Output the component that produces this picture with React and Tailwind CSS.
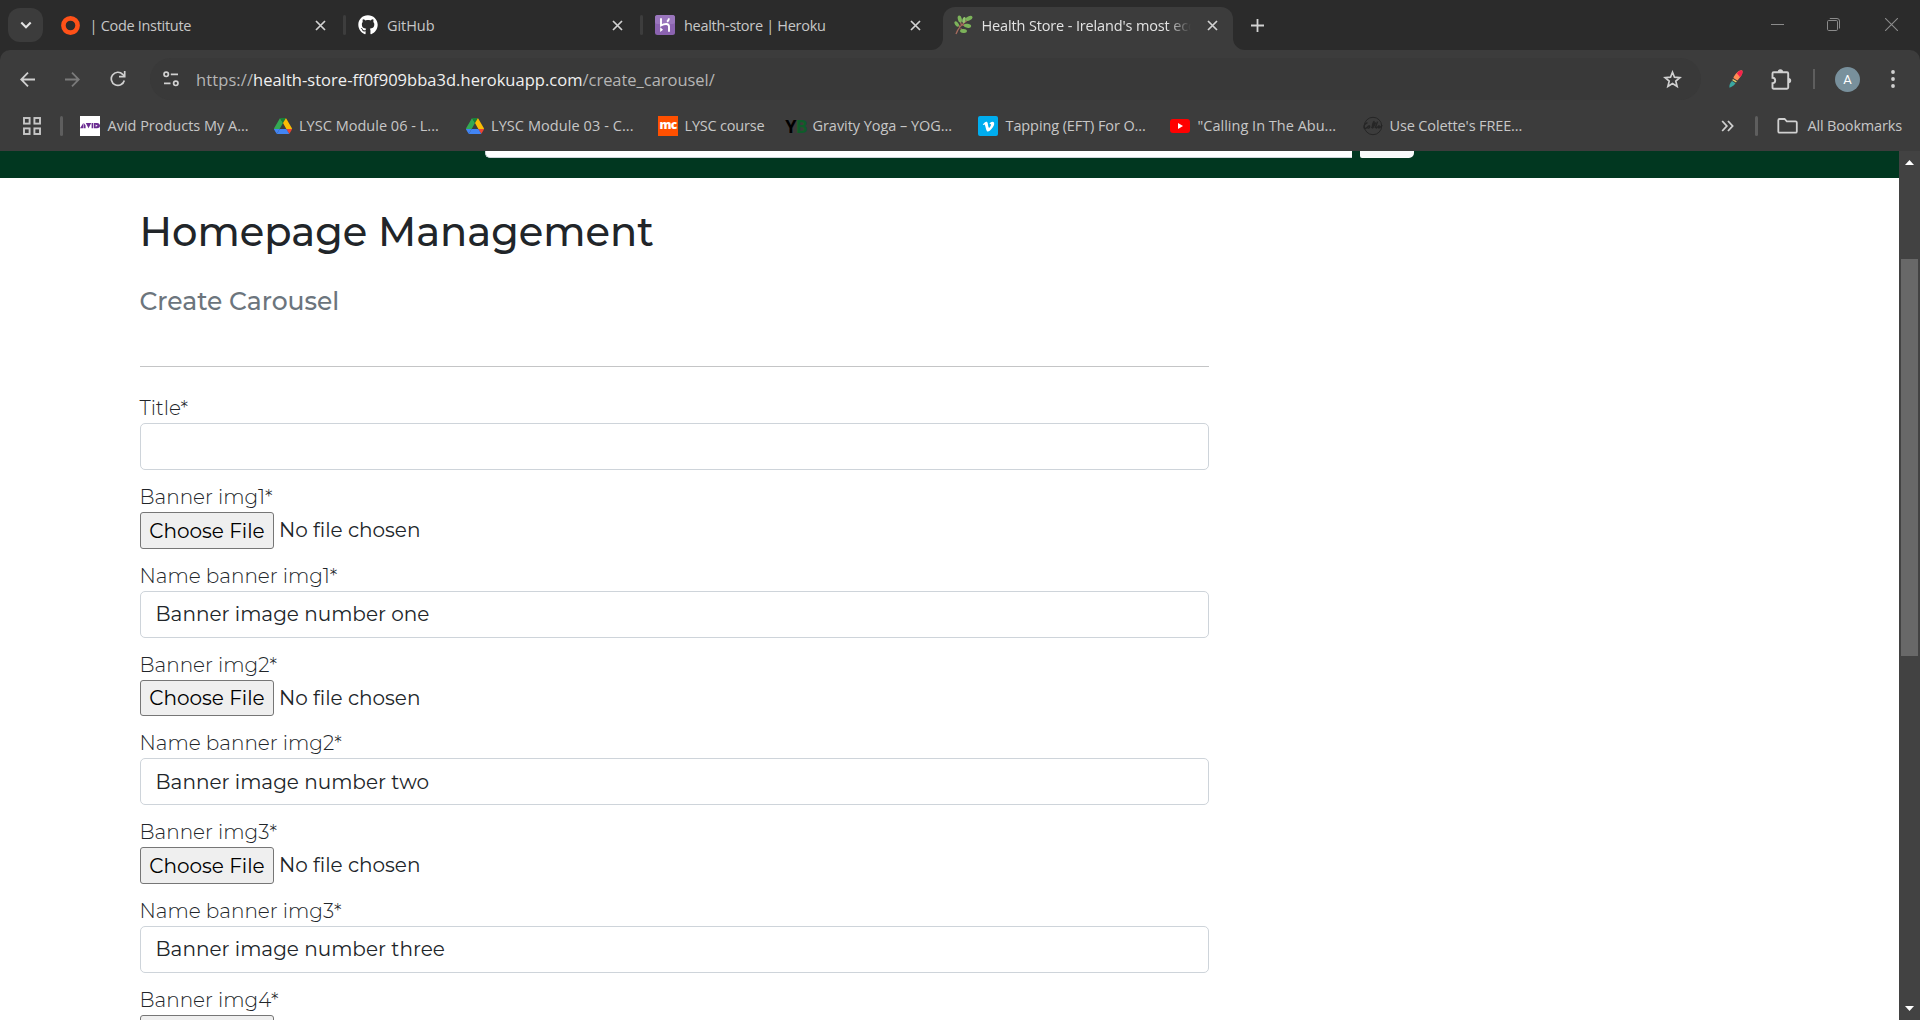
import { FaGithub, FaVimeoV } from "react-icons/fa";

const CloseIcon = ({ className = "" }) => (
  <svg className={`h-[11px] w-[11px] shrink-0 ${className}`} viewBox="0 0 11 11" fill="none" stroke="#d2d2d2" strokeWidth="1.7">
    <path d="M1 1l9 9M10 1l-9 9" />
  </svg>
);

const CodeInstituteIcon = () => (
  <svg className="h-5 w-5" viewBox="0 0 20 20" fill="none">
    <circle cx="9.500" cy="10.500" r="7.100" stroke="#ff5118" strokeWidth="4.600" />
  </svg>
);

const HerokuIcon = () => (
  <svg className="h-5 w-5" viewBox="0 0 20 20">
    <rect width="20" height="20" rx="2.5" fill="#8b63b0" />
    <rect width="20" height="9" rx="2.5" fill="#9a76bd" />
    <path d="M6 3.300v7.200c1.800-1 3.600-1.500 5.200-1.500 2 0 2.800 1 2.800 2.600v5.200M14 3.300c-.2 1.300-.9 2.600-1.900 3.500" fill="none" stroke="#fff" strokeWidth="1.900" />
    <path d="M5.200 12.300l2.800 2.400-2.800 2.300z" fill="#fff" />
  </svg>
);

const HerbIcon = () => (
  <svg className="h-5 w-5" viewBox="0 0 20 20">
    <path d="M3 19C4.500 14 8 9.500 16 4M7 12L4.500 9M8.500 10.500L7 5M7.500 13.500L11 16M9.500 10l5 1" fill="none" stroke="#a56a5c" strokeWidth="1.300" />
    <g fill="#7cb35a">
      <ellipse cx="3.700" cy="9" rx="1.700" ry="3" transform="rotate(-35 3.700 9)" />
      <ellipse cx="6.800" cy="4" rx="2" ry="3.500" transform="rotate(-14 6.800 4)" />
      <ellipse cx="11" cy="5" rx="1.700" ry="3" transform="rotate(14 11 5)" fill="#92c36e" />
      <ellipse cx="16" cy="3.300" rx="3.700" ry="2.100" transform="rotate(-25 16 3.300)" />
      <ellipse cx="14.500" cy="10.800" rx="3.700" ry="2" transform="rotate(12 14.500 10.800)" />
      <ellipse cx="10.500" cy="16" rx="3.500" ry="1.900" transform="rotate(6 10.500 16)" />
    </g>
  </svg>
);

const DriveIcon = () => (
  <svg className="h-[18px] w-[18px]" viewBox="0 0 87.300 78">
    <path d="m6.600 66.850 3.850 6.650c.8 1.400 1.950 2.500 3.300 3.300l13.750-23.800h-27.500c0 1.550.4 3.100 1.200 4.500z" fill="#4285f4" />
    <path d="m43.650 25-13.750-23.800c-1.350.8-2.500 1.900-3.300 3.300l-25.400 44a9.060 9.060 0 0 0 -1.200 4.500h27.500z" fill="#34a853" />
    <path d="m73.550 76.800c1.350-.8 2.500-1.900 3.300-3.300l1.600-2.750 7.650-13.250c.8-1.400 1.200-2.950 1.200-4.500h-27.502l5.852 11.500z" fill="#ea4335" />
    <path d="m43.650 25 13.750-23.800c-1.350-.8-2.900-1.200-4.500-1.200h-18.500c-1.600 0-3.150.45-4.500 1.200z" fill="#188038" />
    <path d="m59.800 53h-32.300l-13.750 23.800c1.350.8 2.900 1.200 4.500 1.200h50.800c1.600 0 3.150-.45 4.500-1.200z" fill="#4285f4" />
    <path d="m73.400 26.500-12.700-22c-.8-1.400-1.950-2.500-3.300-3.300l-13.750 23.800 16.150 28h27.450c0-1.550-.4-3.100-1.200-4.500z" fill="#fbbc04" />
  </svg>
);

const AvidIcon = () => (
  <svg className="h-5 w-5" viewBox="0 0 20 20">
    <rect width="20" height="20" fill="#fff" />
    <g fill="#6a2b91">
      <path d="M0 12.300L3.300 7v5.300zM3.800 7v5.300h1.800V9.500zM5.800 7h5.400L8.500 12.300zM11.600 7h1.700v5.300h-1.700zM14 7h2c3.500 0 4 1.800 4 2.700s-.5 2.600-4 2.600h-2z" />
    </g>
    <path d="M15.600 8.500v2.300l2-1.150z" fill="#fff" />
  </svg>
);

const McIcon = () => (
  <span className="flex h-5 w-5 items-center justify-center bg-[#ff5000] pb-[2px] font-['Open_Sans',sans-serif] text-[12px] leading-none font-extrabold tracking-[-0.8px] text-white">mc</span>
);

const YbIcon = () => (
  <span className="flex h-5 w-5 items-center justify-center font-['Open_Sans',sans-serif] text-[18px] leading-none font-bold tracking-[-1px] text-black">
    Y<span className="text-[#0f5c2a]">B</span>
  </span>
);

const VimeoIcon = () => (
  <span className="flex h-5 w-5 items-center justify-center rounded-[2px] bg-[#00adef] text-white">
    <FaVimeoV size={13} />
  </span>
);

const YoutubeIcon = () => (
  <svg className="h-5 w-5" viewBox="0 0 20 20">
    <rect x="0" y="3" width="20" height="14" rx="3" fill="#f00" />
    <path d="M8 7l5 3-5 3z" fill="#fff" />
  </svg>
);

const ColetteIcon = () => (
  <svg className="h-5 w-5" viewBox="0 0 20 20" fill="none" stroke="#262626">
    <circle cx="10" cy="10" r="8.700" strokeWidth="1" />
    <path d="M4.500 7.200c-1-.8-3.700 1.500-3.600 4 .1 2.400 3 1 4.300-.8 1-1.400 2.200-.2 1.200 1.300-1 1.200-2.300 0-1.300-1.300M8.500 12c1.700-2.500 3-6 2.500-6.500s-2.500 5.500-1.500 6.500c1 .3 2.500-5 3.500-5.300M12 12c1-2 2.300-5.500 2.500-6.300-.7 2-2.300 6-1.300 6.300 1.200.2 1.800-2.300 2.800-2.400 1 .2-1.200 2.400 0 2.400 1 0 2.300-1.800 3.200-2.700" strokeWidth="1.300" />
  </svg>
);

const TAB_TEXT = "font-['Open_Sans',sans-serif] text-[14.5px] leading-5 whitespace-nowrap";

function InactiveTab({ icon, title, tracking, width, iconPad, divider = true }) {
  return (
    <div className={`flex h-[34px] items-center ${width}`}>
      <div className={`flex items-center ${iconPad}`}>{icon}</div>
      <span className={`${TAB_TEXT} mt-px ml-[9px] grow text-[#c7c7c7] ${tracking}`}>{title}</span>
      <CloseIcon className="mr-[17.5px]" />
      <span className={`h-5 w-[3px] rounded-full ${divider ? "bg-[#3d3d3d]" : ""}`} />
    </div>
  );
}

function TabStrip() {
  return (
    <div className="flex h-[50px] bg-[#2b2b2b]">
      <div className="ml-2 mt-2 flex h-[34px] w-[35px] items-center justify-center rounded-[12px] bg-[#3c3c3c]">
        <svg className="h-[10px] w-[12px]" viewBox="0 0 12 10" fill="none" stroke="#e3e3e3" strokeWidth="2.100">
          <path d="M1.300 2.500L6 7.200l4.700-4.700" />
        </svg>
      </div>
      <div className="mt-2 flex">
        <InactiveTab icon={<CodeInstituteIcon />} title="| Code Institute" tracking="tracking-[-0.3px]" width="w-[303px]" iconPad="pl-[17.5px]" />
        <InactiveTab icon={<FaGithub size={20} color="#fff" />} title="GitHub" tracking="tracking-[-0.05px]" width="w-[297px]" iconPad="pl-[12px]" />
        <InactiveTab icon={<HerokuIcon />} title="health-store | Heroku" tracking="tracking-[-0.3px]" width="w-[298px]" iconPad="pl-[12px]" divider={false} />
      </div>
      <div className="mt-[7px] ml-[-10px] flex h-[43px]">
        <svg className="mt-[31px] h-3 w-3" viewBox="0 0 12 12"><path d="M12 0v12H0A12 12 0 0 0 12 0z" fill="#3c3c3c" /></svg>
        <div className="flex w-[290px] items-start rounded-t-[12px] bg-[#3c3c3c] pt-2">
          <span className="ml-[10px]"><HerbIcon /></span>
          <span className={`${TAB_TEXT} ml-[8.5px] w-[211px] overflow-hidden pt-px tracking-[-0.14px] text-[#e3e3e3] [mask-image:linear-gradient(to_right,black_185px,transparent_209px)]`}>
            Health Store - Ireland's most eco
          </span>
          <CloseIcon className="mt-[5px] ml-[14px]" />
        </div>
        <svg className="mt-[31px] h-3 w-3" viewBox="0 0 12 12"><path d="M0 0v12H12A12 12 0 0 1 0 0z" fill="#3c3c3c" /></svg>
      </div>
      <svg className="mt-[19px] ml-[5.5px] h-[13px] w-[13px]" viewBox="0 0 13 13" stroke="#d2d2d2" strokeWidth="1.800">
        <path d="M6.500 0v13M0 6.500h13" />
      </svg>
      <div className="ml-auto flex h-[49px] items-center">
        <svg className="h-[13px] w-[13px]" viewBox="0 0 13 13" stroke="#8b8b8b"><path d="M0 6.500h13" /></svg>
        <svg className="ml-[43px] h-[13px] w-[13px]" viewBox="0 0 13 13" fill="none" stroke="#8b8b8b">
          <rect x=".5" y="2.500" width="10" height="10" rx="1.200" />
          <path d="M2.800.5h7.200a2.500 2.500 0 0 1 2.500 2.500v7.500" />
        </svg>
        <svg className="mr-[22px] ml-[45px] h-[13px] w-[13px]" viewBox="0 0 13 13" stroke="#8b8b8b" strokeWidth="1.100"><path d="M0 0l13 13M13 0L0 13" /></svg>
      </div>
    </div>
  );
}

function AddressBar() {
  return (
    <div className="flex h-[58px] items-center">
      <svg className="ml-5 h-[15px] w-[15px]" viewBox="0 0 15 15" fill="none" stroke="#d0d0d0" strokeWidth="1.800"><path d="M15 7.500H1.500M8 .7L1.200 7.500 8 14.300" /></svg>
      <svg className="ml-[30px] h-[15px] w-[15px]" viewBox="0 0 15 15" fill="none" stroke="#7a7a7a" strokeWidth="1.800"><path d="M0 7.500h13.500M7 .7l6.800 6.800L7 14.300" /></svg>
      <svg className="ml-[30px] h-[16px] w-[16px]" viewBox="0 0 16 16" fill="none" stroke="#d0d0d0" strokeWidth="1.700">
        <path d="M14.300 9.500A6.600 6.600 0 1 1 12.700 3.300L14.300 5.300" />
        <path d="M14.700 0v5.700H9" />
      </svg>
      <div className="ml-[24px] flex h-[42px] w-[1551px] items-center rounded-full bg-[#393939]">
        <svg className="ml-[13px] h-[16px] w-[16px]" viewBox="0 0 16 16" fill="none" stroke="#d0d0d0" strokeWidth="1.700">
          <circle cx="3.200" cy="3.300" r="2.200" /><path d="M7.800 3.300H15M1 12.300h6.500" /><circle cx="12.800" cy="12.300" r="2.200" />
        </svg>
        <div className="mt-px ml-[17px] font-['Open_Sans',sans-serif] text-[16.5px] leading-6 whitespace-nowrap text-[#b5b5b5]">
          <span className="tracking-[0.1px]">https://</span>
          <span className="tracking-[0.03px] text-[#f0f0f0]">health-store-ff0f909bba3d.herokuapp.com</span>
          <span className="tracking-[-0.03px]">/create_carousel/</span>
        </div>
        <svg className="mr-[19px] ml-auto h-[19px] w-[19px]" viewBox="0 0 19 19" fill="none" stroke="#d0d0d0" strokeWidth="1.700">
          <path d="M9.500 2.200l2 5 5.400.4-4.100 3.500 1.300 5.300-4.600-2.900-4.600 2.900 1.300-5.300L2.100 7.600l5.400-.4z" />
        </svg>
      </div>
      <svg className="ml-[28px] h-[18px] w-[14px]" viewBox="0 0 14 18">
        <path d="M13 .2c1.200 1.600.3 5.400-4.600 10.300L4.300 7.900C6.500 3 10.200-.2 13 .2z" fill="#ff8c55" />
        <path d="M13 .2c1.200 1.600.5 4-1.900 7L7.800 3.200C9.800.8 11.600 0 13 .2z" fill="#f6224c" />
        <path d="M3.900 8.900l3.900 2.400-.8 1.300L3.300 10.300z" fill="#e3cf6b" />
        <path d="M3 11l3.500 2.200C5.500 15 3.500 16.200.5 17.800 0 15.500 1 13 3 11z" fill="#3aa7a0" />
      </svg>
      <svg className="ml-[28px] h-[21px] w-[21px]" viewBox="0 0 21 21">
        <path d="M1.500 4.500q0-1.200 1.200-1.200H16q1.200 0 1.200 1.200v14q0 1.200-1.200 1.200H2.700q-1.200 0-1.200-1.200v-4.300c3.600-.2 3.600-5.200 0-5.400z" fill="none" stroke="#d0d0d0" strokeWidth="1.900" />
        <path d="M6.700 3a2.700 2.700 0 0 1 5.400 0zM17.600 9a2.600 2.600 0 0 1 0 5.200z" fill="#d0d0d0" />
      </svg>
      <span className="ml-[21px] h-5 w-[2px] bg-[#5e5e5e]" />
      <span className="ml-5 flex h-[25px] w-[25px] items-center justify-center rounded-full bg-[#78909c] font-[Roboto,sans-serif] text-[13px] leading-none text-white">A</span>
      <svg className="ml-[30.5px] h-[18px] w-[4px]" viewBox="0 0 4 18" fill="#d0d0d0"><circle cx="2" cy="2" r="1.900" /><circle cx="2" cy="9" r="1.900" /><circle cx="2" cy="16" r="1.900" /></svg>
    </div>
  );
}

const BOOKMARKS = [
  { icon: <AvidIcon />, text: "Avid Products My A...", cls: "w-[193px] tracking-[-0.01px]" },
  { icon: <DriveIcon />, text: "LYSC Module 06 - L...", cls: "w-[192px] tracking-[0.02px] pl-px", gap: "mr-[5px]" },
  { icon: <DriveIcon />, text: "LYSC Module 03 - C...", cls: "w-[193px] tracking-[0.08px] pl-px", gap: "mr-[5px]" },
  { icon: <McIcon />, text: "LYSC course", cls: "w-[128px] tracking-[-0.19px]", gap: "mr-[6.5px]" },
  { icon: <YbIcon />, text: "Gravity Yoga – YOG...", cls: "w-[192px] tracking-[-0.05px]", gap: "mr-[6.5px]" },
  { icon: <VimeoIcon />, text: "Tapping (EFT) For O...", cls: "w-[192px] tracking-[-0.1px]" },
  { icon: <YoutubeIcon />, text: "\"Calling In The Abu...", cls: "w-[193px] tracking-[0.01px]" },
  { icon: <ColetteIcon />, text: "Use Colette's FREE...", cls: "w-[192px] tracking-[-0.13px]", gap: "mr-[6.5px]" },
];

function BookmarksBar() {
  return (
    <div className="flex h-[36px] items-center font-['Open_Sans',sans-serif] text-[14.5px] leading-5 whitespace-nowrap text-[#c7c7c7]">
      <svg className="ml-[23px] h-[18px] w-[18px]" viewBox="0 0 18 18" fill="none" stroke="#c7c7c7" strokeWidth="1.900">
        <rect x="1" y="1" width="5.600" height="5.600" /><rect x="11.400" y="1" width="5.600" height="5.600" /><rect x="1" y="11.400" width="5.600" height="5.600" /><rect x="11.400" y="11.400" width="5.600" height="5.600" />
      </svg>
      <span className="ml-[19px] h-5 w-[3px] rounded-full bg-[#5e5e5e]" />
      <div className="ml-[17px] flex">
        {BOOKMARKS.map((b, i) => (
          <div key={i} className={`flex items-center ${b.cls}`}>
            <span className={`flex w-5 shrink-0 ${b.gap || "mr-[7.5px]"}`}>{b.icon}</span>
            {b.text}
          </div>
        ))}
      </div>
      <svg className="ml-auto h-[12px] w-[13px]" viewBox="0 0 13 12" fill="none" stroke="#d0d0d0" strokeWidth="1.800"><path d="M1.200 1l4.600 5-4.600 5M7 1l4.600 5L7 11" /></svg>
      <span className="ml-[21px] h-5 w-[3px] rounded-full bg-[#5e5e5e]" />
      <svg className="ml-[19px] h-[16px] w-[21px]" viewBox="0 0 21 16" fill="none" stroke="#d0d0d0" strokeWidth="1.800">
        <path d="M1.300 2.300q0-1.300 1.300-1.300h5l2.200 2.300h8.700q1.300 0 1.300 1.300v8.800q0 1.300-1.300 1.300H2.600q-1.300 0-1.300-1.300z" />
      </svg>
      <span className="mr-[18px] ml-[9px] tracking-[-0.16px]">All Bookmarks</span>
    </div>
  );
}

const LABEL = "-ml-[0.5px] flex h-[30px] items-center text-[20px] leading-[30px] font-light";

const TextField = ({ label, value }) => (
  <div className="mb-3">
    <label className={LABEL}>{label}</label>
    <div className="flex h-[47px] items-center rounded-[5px] border border-[#ced4da] bg-white px-[14.5px] text-[20px] leading-[30px]">{value}</div>
  </div>
);

const FileField = ({ label }) => (
  <div className="mb-3">
    <label className={LABEL}>{label}</label>
    <div className="flex h-[36.5px] items-center text-[20px] leading-[30px]">
      <span className="flex h-full w-[134px] items-center justify-center rounded-[3px] border border-[#767676] bg-[#efefef] pt-px text-black">Choose File</span>
      <span className="ml-[5px]">No file chosen</span>
    </div>
  </div>
);

const ScrollBar = () => (
  <div className="flex w-[21px] shrink-0 flex-col items-center bg-[#424242]">
    <svg className="mt-[9px] h-[5px] w-[9px]" viewBox="0 0 9 5" fill="#fff"><path d="M4.500 0L9 5H0z" /></svg>
    <div className="mt-[94px] h-[397px] w-[17px] bg-[#686868]" />
    <svg className="mt-auto mb-[9px] h-[5px] w-[9px]" viewBox="0 0 9 5" fill="#fff"><path d="M4.500 5L9 0H0z" /></svg>
  </div>
);

export default function App() {
  return (
    <div className="flex h-[1020px] w-[1920px] flex-col overflow-hidden bg-[#2b2b2b]">
      <TabStrip />
      <div className="h-[101px] shrink-0 rounded-t-[10px] bg-[#3c3c3c]">
        <AddressBar />
        <BookmarksBar />
      </div>
      <div className="flex min-h-0 grow">
        <main className="grow overflow-hidden bg-white font-[Montserrat,Inter,sans-serif] text-[#212529]">
          <div className="flex h-[27px] items-start bg-[#013720]">
            <div className="ml-[485px] h-[7px] w-[867px] rounded-bl-[5px] border-b border-l border-[#ced4da] bg-white" />
            <div className="ml-2 h-[7px] w-[54px] rounded-br-[5px] rounded-bl-[2px] bg-[#f8f9fa]" />
          </div>
          <div className="ml-[140px] w-[1069px]">
            <h2 className="-ml-[0.5px] pt-[30px] text-[40px] leading-[48px] font-medium">Homepage Management</h2>
            <h5 className="mt-[30px] -ml-[0.5px] text-[25px] leading-[30px] font-medium text-[#6c757d]">Create Carousel</h5>
            <hr className="mt-[50px] mb-[26px] border-[#c4c5c6]" />
            <TextField label="Title*" value="" />
            <FileField label="Banner img1*" />
            <TextField label="Name banner img1*" value="Banner image number one" />
            <FileField label="Banner img2*" />
            <TextField label="Name banner img2*" value="Banner image number two" />
            <FileField label="Banner img3*" />
            <TextField label="Name banner img3*" value="Banner image number three" />
            <FileField label="Banner img4*" />
          </div>
        </main>
        <ScrollBar />
      </div>
    </div>
  );
}
